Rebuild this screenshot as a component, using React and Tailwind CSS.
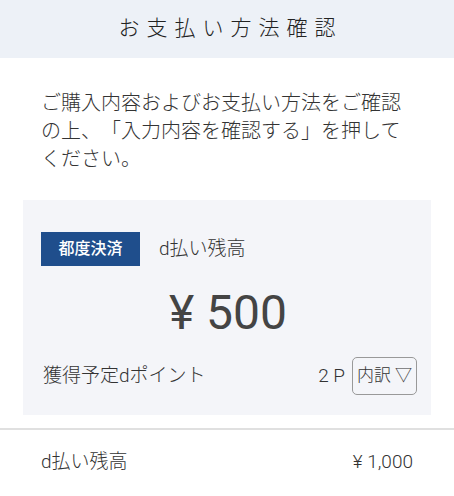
export default function App() {
  return (
    <div
      className="w-[454px] h-[496px] bg-white text-[#333] overflow-hidden [text-spacing-trim:space-all] font-light"
      style={{ fontFamily: 'Roboto, "Noto Sans CJK JP", sans-serif' }}
    >
      <div className="h-[58px] bg-[#edf1f7] flex items-center justify-center">
        <h1 className="text-[21px] tracking-[7px] pl-[7px] text-[#222] font-light">お支払い方法確認</h1>
      </div>

      <p className="px-[41px] pt-[31px] text-[20px] leading-[28px] text-[#333]">
        ご購入内容およびお支払い方法をご確認の上、「入力内容を確認する」を押してください。
      </p>

      <div className="mx-[23px] mt-[27px] h-[215px] bg-[#f4f5f9] pl-[18px] pr-[14px] pt-[32px]">
        <div className="flex items-center">
          <span className="w-[99px] h-[34px] bg-[#1f4e8c] text-white text-[16px] font-medium flex items-center justify-center">都度決済</span>
          <span className="ml-[19px] text-[19px] text-[#333]">d払い残高</span>
        </div>
        <div className="mt-[19px] text-center text-[48px] leading-[56px] text-[#444] font-normal pr-[2px]">¥ 500</div>
        <div className="mt-[16px] flex items-center justify-between">
          <span className="text-[19px] text-[#333] ml-[2px]">獲得予定dポイント</span>
          <div className="flex items-center">
            <span className="text-[19px] mr-[7px]">2 P</span>
            <span className="w-[65px] h-[38px] border border-[#999] rounded-[5px] flex items-center justify-center text-[17px] text-[#333]">内訳 ▽</span>
          </div>
        </div>
      </div>

      <div className="mt-[13px] border-t-2 border-[#e0e0e0] flex items-center justify-between px-[41px] h-[66px]">
        <span className="text-[19px]">d払い残高</span>
        <span className="text-[19px]">¥ 1,000</span>
      </div>
    </div>
  );
}
